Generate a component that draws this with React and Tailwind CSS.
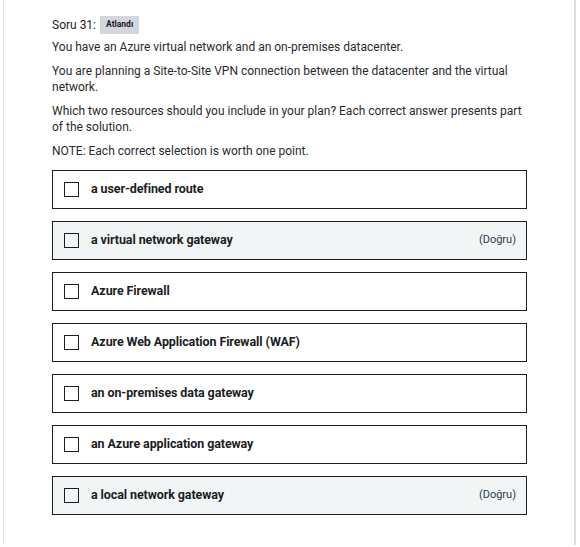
const options = [
  { label: 'a user-defined route', correct: false },
  { label: 'a virtual network gateway', correct: true },
  { label: 'Azure Firewall', correct: false },
  { label: 'Azure Web Application Firewall (WAF)', correct: false },
  { label: 'an on-premises data gateway', correct: false },
  { label: 'an Azure application gateway', correct: false },
  { label: 'a local network gateway', correct: true },
];

function Option({ label, correct }) {
  return (
    <div
      className={`flex items-center h-[39px] border border-[#1c1d1f] pl-[11px] pr-[10px] ${
        correct ? 'bg-[#f2f5f5]' : 'bg-white'
      }`}
    >
      <span className="w-[15px] h-[15px] border border-[#1c1d1f] shrink-0" />
      <span className="ml-[12px] text-[12.5px] font-bold text-[#1c1d1f] tracking-[-0.1px]">{label}</span>
      {correct && (
        <span className="ml-auto text-[11px] text-[#2d3b45]">(Doğru)</span>
      )}
    </div>
  );
}

export default function App() {
  return (
    <div className="w-[580px] h-[547px] bg-white font-['Roboto','Liberation_Sans',sans-serif] text-[#1c1d1f]">
      <div className="ml-[3px] w-[573px] h-[545px] border-l border-[#e4e4e4] border-r-2 border-r-[#dcdcdc] pl-[48px] pr-[47px] pt-[15px]">
        <div className="flex items-center gap-[4px] text-[12px] h-[19px]">
          <span>Soru 31:</span>
          <span className="bg-[#d1d7dc] px-[6px] h-[18px] flex items-center text-[8.5px] font-bold">Atlandı</span>
        </div>
        <div className="mt-[5px] text-[12px] leading-[16px] text-[#2a2b2d] flex flex-col gap-[8px]">
          <p>You have an Azure virtual network and an on-premises datacenter.</p>
          <p>You are planning a Site-to-Site VPN connection between the datacenter and the virtual network.</p>
          <p>Which two resources should you include in your plan? Each correct answer presents part of the solution.</p>
          <p>NOTE: Each correct selection is worth one point.</p>
        </div>
        <div className="mt-[11px] flex flex-col gap-[12px]">
          {options.map(o => (
            <Option key={o.label} {...o} />
          ))}
        </div>
      </div>
    </div>
  );
}
